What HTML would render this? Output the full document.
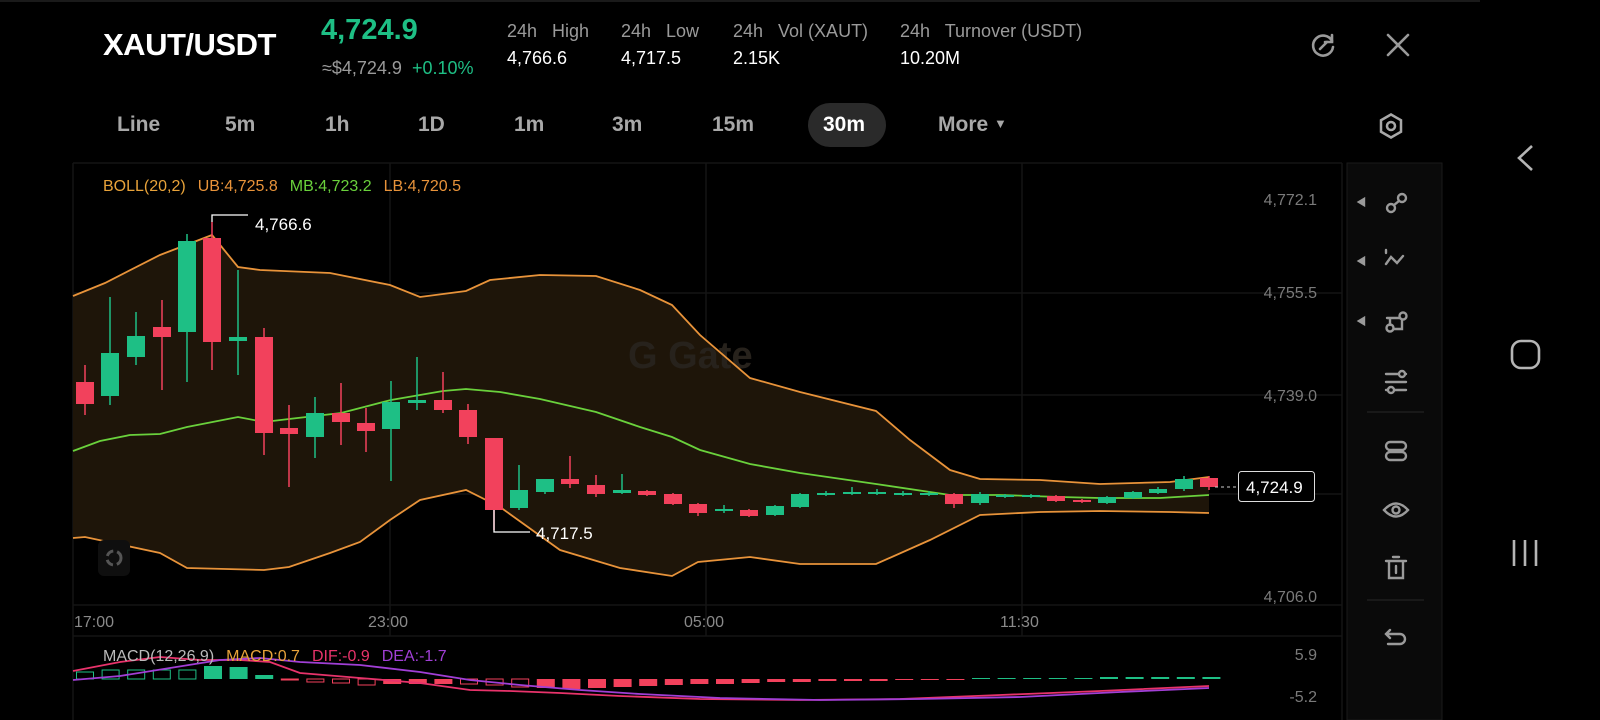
<!DOCTYPE html>
<html><head><meta charset="utf-8"><style>
*{margin:0;padding:0;box-sizing:border-box}
body{width:1600px;height:720px;background:#000;overflow:hidden;font-family:"Liberation Sans",sans-serif;color:#fff;position:relative}
.a{position:absolute;white-space:nowrap}
.g{color:#9a9a9a}
.tf{position:absolute;top:113px;font-size:21px;color:#a8a8a8;font-weight:bold}
</style></head><body>
<div class="a" style="left:0;top:0;width:1480px;height:2px;background:#1a1a1a"></div>
<div class="a" style="left:103px;top:27px;font-size:31px;font-weight:bold;letter-spacing:-0.5px">XAUT/USDT</div>
<div class="a" style="left:321px;top:14px;font-size:29px;font-weight:bold;color:#1ebf85">4,724.9</div>
<div class="a" style="left:322px;top:58px;font-size:18px;color:#9a9a9a">≈$4,724.9 <span style="color:#1ebf85">&nbsp;+0.10%</span></div>
<div class="a g" style="left:507px;top:21px;font-size:18px">24h&nbsp;&nbsp; High</div>
<div class="a" style="left:507px;top:48px;font-size:18px">4,766.6</div>
<div class="a g" style="left:621px;top:21px;font-size:18px">24h&nbsp;&nbsp; Low</div>
<div class="a" style="left:621px;top:48px;font-size:18px">4,717.5</div>
<div class="a g" style="left:733px;top:21px;font-size:18px">24h&nbsp;&nbsp; Vol (XAUT)</div>
<div class="a" style="left:733px;top:48px;font-size:18px">2.15K</div>
<div class="a g" style="left:900px;top:21px;font-size:18px">24h&nbsp;&nbsp; Turnover (USDT)</div>
<div class="a" style="left:900px;top:48px;font-size:18px">10.20M</div>
<svg class="a" style="left:1308px;top:31px" width="30" height="30" viewBox="0 0 30 30" fill="none" stroke="#9a9a9a" stroke-width="2.6" stroke-linecap="round"><path d="M24 10A10 10 0 1 0 25 16"/><path d="M24 4v7h-7"/><path d="M12 18l7-7"/></svg>
<svg class="a" style="left:1385px;top:32px" width="26" height="26" viewBox="0 0 26 26" stroke="#9a9a9a" stroke-width="2.6" stroke-linecap="round"><path d="M3 3l20 20M23 3L3 23"/></svg>

<div class="tf" style="left:117px">Line</div>
<div class="tf" style="left:225px">5m</div>
<div class="tf" style="left:325px">1h</div>
<div class="tf" style="left:418px">1D</div>
<div class="tf" style="left:514px">1m</div>
<div class="tf" style="left:612px">3m</div>
<div class="tf" style="left:712px">15m</div>
<div class="a" style="left:808px;top:103px;width:78px;height:44px;border-radius:22px;background:#2a2a2a"></div>
<div class="tf" style="left:823px;color:#fff">30m</div>
<div class="tf" style="left:938px">More <span style="font-size:13px;position:relative;top:-3px">▼</span></div>
<svg class="a" style="left:1377px;top:112px" width="28" height="28" viewBox="0 0 28 28" fill="none" stroke="#a8a8a8" stroke-width="2.5"><path d="M14 2.5L24 8.25v11.5L14 25.5 4 19.75V8.25z"/><circle cx="14" cy="14" r="4"/></svg>

<svg class="a" style="left:0;top:0" width="1600" height="720">
<g stroke="#141414" stroke-width="1.5">
<line x1="73" y1="163" x2="1342" y2="163"/>
<line x1="73" y1="293" x2="1342" y2="293"/>
<line x1="73" y1="395" x2="1342" y2="395"/>
<line x1="73" y1="494" x2="1342" y2="494"/>
<line x1="73" y1="605" x2="1342" y2="605"/>
<line x1="73" y1="636" x2="1342" y2="636"/>
<line x1="73" y1="163" x2="73" y2="720"/>
<line x1="390" y1="163" x2="390" y2="636"/>
<line x1="706" y1="163" x2="706" y2="636"/>
<line x1="1022" y1="163" x2="1022" y2="636"/>
<line x1="1342" y1="163" x2="1342" y2="720"/>
</g>
<rect x="1347" y="163" width="95" height="557" fill="#0a0a0a" stroke="#1a1a1a"/>
<path d="M73,296 L105,283 L160,255 L212,235 L238,267 L260,270 L330,273 L390,285 L420,297 L466,291 L490,280 L540,275 L596,276 L640,290 L672,305 L700,335 L750,378 L800,392 L876,411 L910,440 L950,470 L980,479 L1040,480 L1100,484 L1170,482 L1209,477 L1209,513 L1170,512 L1100,511 L1040,512 L980,515 L930,540 L876,564 L800,564 L750,557 L698,562 L672,576 L620,568 L560,550 L500,507 L466,490 L420,500 L390,520 L360,542 L330,553 L289,567 L264,570 L187,568 L160,553 L85,537 L73,538 Z" fill="#1e1509"/>
<text x="628" y="368" font-size="38" font-weight="bold" fill="#27221c" font-family="Liberation Sans">G Gate</text>
<g fill="none" stroke-width="1.8">
<polyline stroke="#e8933a" points="73,296 105,283 160,255 212,235 238,267 260,270 330,273 390,285 420,297 466,291 490,280 540,275 596,276 640,290 672,305 700,335 750,378 800,392 876,411 910,440 950,470 980,479 1040,480 1100,484 1170,482 1209,477"/>
<polyline stroke="#e8933a" points="73,538 85,537 160,553 187,568 264,570 289,567 330,553 360,542 390,520 420,500 466,490 500,507 560,550 620,568 672,576 698,562 750,557 800,564 876,564 930,540 980,515 1040,512 1100,511 1170,512 1209,513"/>
<polyline stroke="#6ad13c" points="73,451 100,441 130,435 160,434 187,427 238,417 264,422 289,419 341,413 391,400 443,391 466,389 500,392 540,399 596,412 640,427 672,437 700,450 750,464 800,473 876,484 950,495 1000,495 1060,497 1100,498 1160,498 1209,495"/>
</g>
<g id="c"></g>
<path d="M212,222 V215 H248" stroke="#fff" fill="none" stroke-width="1.3"/>
<text x="255" y="230" font-size="17" fill="#fff">4,766.6</text>
<path d="M494,510 V532 H530" stroke="#fff" fill="none" stroke-width="1.3"/>
<text x="536" y="539" font-size="17" fill="#fff">4,717.5</text>
<line x1="1215" y1="487" x2="1238" y2="487" stroke="#ccc" stroke-dasharray="3,3"/>
<rect x="1238.5" y="471.5" width="76" height="30" rx="3" fill="#000" stroke="#ddd"/>
<text x="1246" y="493" font-size="17" fill="#fff">4,724.9</text>
<g font-size="16" fill="#7a7a7a" text-anchor="end">
<text x="1317" y="205">4,772.1</text><text x="1317" y="298">4,755.5</text><text x="1317" y="401">4,739.0</text><text x="1317" y="602">4,706.0</text>
<text x="1317" y="660">5.9</text><text x="1317" y="702">-5.2</text></g>
<g font-size="16" fill="#8a8a8a"><text x="74" y="627">17:00</text><text x="368" y="627">23:00</text><text x="684" y="627">05:00</text><text x="1000" y="627">11:30</text></g>
<text x="103" y="191" font-size="16"><tspan fill="#e8a33a">BOLL(20,2)</tspan><tspan dx="12" fill="#e8933a">UB:4,725.8</tspan><tspan dx="12" fill="#6ad13c">MB:4,723.2</tspan><tspan dx="12" fill="#e8933a">LB:4,720.5</tspan></text>
<rect x="98" y="540" width="32" height="36" rx="6" fill="#0f0f0f"/>
<circle cx="114" cy="558" r="7" fill="none" stroke="#555" stroke-width="3" stroke-dasharray="8,4"/>
<g id="m"></g>
<polyline fill="none" stroke="#e8336b" stroke-width="1.8" points="73,671 120,662 160,657 200,660 240,660 270,662 300,673 360,678 420,683 470,690 510,691 560,693 620,696 700,699 800,700 900,699 1000,695 1100,691 1209,686"/>
<polyline fill="none" stroke="#a13fd6" stroke-width="1.8" points="73,680 120,676 170,668 220,660 260,658 300,662 360,665 420,672 470,680 520,685 580,690 640,694 720,698 820,700 920,699 1020,697 1120,692 1209,688"/>
<text x="103" y="661" font-size="16"><tspan fill="#bbb">MACD(12,26,9)</tspan><tspan dx="12" fill="#e8a33a">MACD:0.7</tspan><tspan dx="12" fill="#e8336b">DIF:-0.9</tspan><tspan dx="12" fill="#a13fd6">DEA:-1.7</tspan></text>
<g fill="none" stroke="#9a9a9a" stroke-width="2.4" stroke-linecap="round">
<path d="M1364,199 l-5,3 5,3z" fill="#9a9a9a"/><path d="M1364,258 l-5,3 5,3z" fill="#9a9a9a"/><path d="M1364,318 l-5,3 5,3z" fill="#9a9a9a"/>
<circle cx="1391" cy="208" r="4"/><circle cx="1402" cy="198" r="4"/><path d="M1394,205 l5,-4"/>
<path d="M1386,264 l5,-7 6,6 6,-7 M1386,253 v-3"/>
<circle cx="1390" cy="328" r="3.5"/><circle cx="1403" cy="316" r="3.5"/><path d="M1387,318 h13 M1390,318 v7 M1402,320 v9 h-8"/>
<path d="M1386,374 h20 M1386,382 h20 M1386,390 h20"/><circle cx="1402" cy="374" r="3" fill="#0a0a0a"/><circle cx="1391" cy="390" r="3" fill="#0a0a0a"/>
<rect x="1386" y="442" width="20" height="8" rx="4"/><rect x="1386" y="452" width="20" height="8" rx="4"/>
<path d="M1384,510 q12,-13 24,0 q-12,13 -24,0z"/><circle cx="1396" cy="510" r="3.5"/>
<path d="M1386,561 h20 M1389,561 v17 h14 v-17 M1393,557 h6 M1396,566 v7"/>
<path d="M1390,630 l-4,4 4,4 M1386,634 h14 a5,5 0 0 1 0,10 h-12"/>
</g>
<g stroke="#1e1e1e" stroke-width="1.5"><line x1="1367" y1="412" x2="1424" y2="412"/><line x1="1367" y1="600" x2="1424" y2="600"/></g>
<g fill="none" stroke="#b5b5b5" stroke-width="2.6">
<path d="M1532,146 l-13,12 13,12"/>
<rect x="1512" y="341" width="27" height="27" rx="9"/>
<path d="M1514,540 v26 M1525,540 v26 M1536,540 v26"/></g>
</svg>
<script>
var R="#f2415c",G="#1ebf85";
var c=[[85,382,404,365,415,R],[110,353,396,297,405,G],[136,336,357,312,365,G],[162,327,337,300,390,R],[187,241,332,234,382,G],[212,238,342,222,370,R],[238,337,341,270,375,G],[264,337,433,328,455,R],[289,428,434,405,487,R],[315,413,437,397,458,G],[341,413,422,383,445,R],[366,423,431,408,452,R],[391,402,429,381,481,G],[417,400,403,357,410,G],[443,400,410,372,413,R],[468,410,437,404,444,R],[494,438,510,438,530,R],[519,490,508,465,510,G],[545,479,492,479,494,G],[570,479,484,456,488,R],[596,485,494,475,497,R],[622,490,493,474,494,G],[647,491,495,490,496,R],[673,494,504,493,505,R],[698,504,513,503,516,R],[724,509,511,505,513,G],[749,510,516,509,517,R],[775,506,515,505,516,G],[800,494,507,493,508,G],[826,493,495,491,496,G],[852,492,494,487,495,G],[877,492,494,489,495,G],[903,493,495,491,496,G],[929,493,495,491,496,G],[954,494,504,493,508,R],[980,494,503,492,505,G],[1005,495,497,494,498,G],[1031,495,497,494,498,G],[1056,496,501,495,502,R],[1082,500,502,499,503,R],[1107,497,503,496,504,G],[1133,492,498,491,499,G],[1158,489,493,487,494,G],[1184,479,489,476,491,G],[1209,478,487,476,490,R]];
var s="";c.forEach(function(d){s+='<line x1="'+d[0]+'" x2="'+d[0]+'" y1="'+d[3]+'" y2="'+d[4]+'" stroke="'+d[5]+'" stroke-width="1.5"/><rect x="'+(d[0]-9)+'" y="'+d[1]+'" width="18" height="'+Math.max(2,d[2]-d[1])+'" fill="'+d[5]+'"/>';});
document.getElementById("c").innerHTML=s;
var m="",h=[7,9,9,9,9,13,12,4,-1,-3,-4,-6,-5,-5,-5,-5,-6,-8,-9,-10,-9,-8,-7,-6,-5,-5,-4,-3,-3,-2,-2,-2,-1,-1,-1,1,1,1,1,1,2,2,2,2,2];
h.forEach(function(v,i){var x=85+i*25.6-9,y0=679;var col=v>0?G:R;var filled=(i>=5&&i<=6)||(i>=12&&i<=14)||(i>=18);if(i==7)filled=true;
var y=v>0?y0-v:y0,hh=Math.abs(v);if(filled)m+='<rect x="'+x+'" y="'+y+'" width="18" height="'+hh+'" fill="'+col+'"/>';else m+='<rect x="'+(x+.5)+'" y="'+y+'" width="17" height="'+hh+'" fill="none" stroke="'+col+'"/>';});
document.getElementById("m").innerHTML=m;
</script>
</body></html>
